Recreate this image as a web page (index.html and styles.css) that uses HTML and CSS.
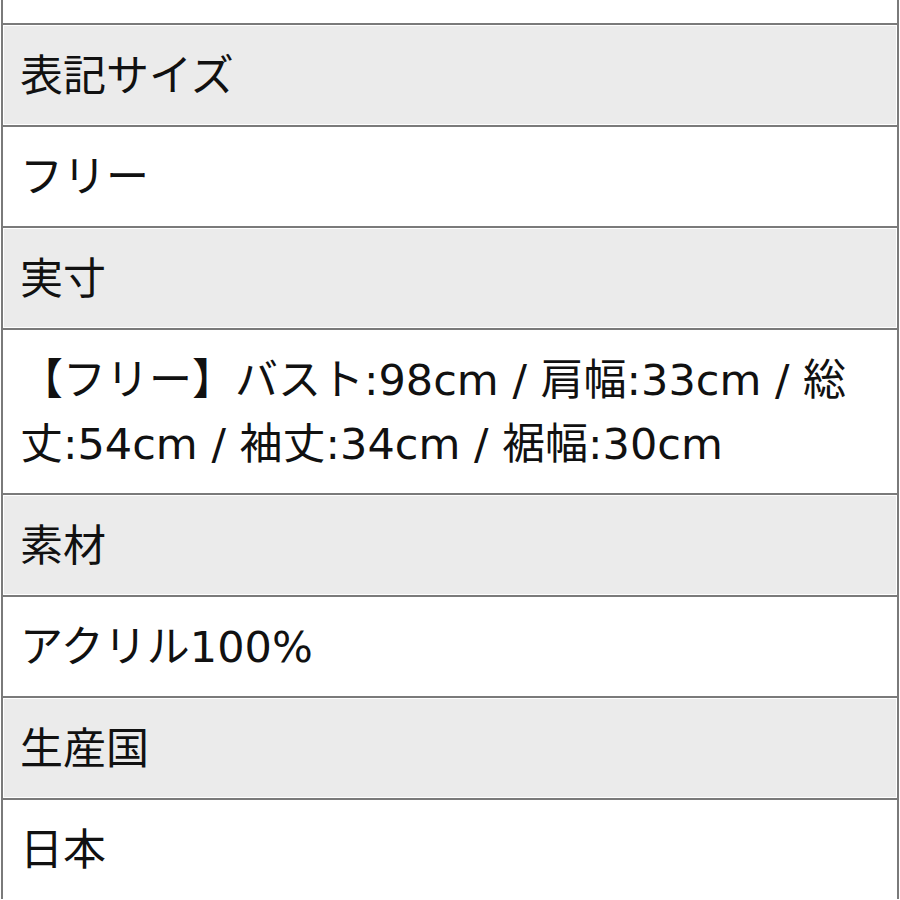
FILE: index.html
```html
<!DOCTYPE html>
<html lang="ja">
<head>
<meta charset="utf-8">
<link rel="stylesheet" href="styles.css">
</head>
<body>
<div class="table">
  <div class="row first"><div class="cell"></div></div>
  <div class="row"><div class="cell head">表記サイズ</div></div>
  <div class="row"><div class="cell">フリー</div></div>
  <div class="row"><div class="cell head">実寸</div></div>
  <div class="row"><div class="cell">【フリー】バスト:98cm / 肩幅:33cm / 総<br>丈:54cm / 袖丈:34cm / 裾幅:30cm</div></div>
  <div class="row"><div class="cell head">素材</div></div>
  <div class="row"><div class="cell">アクリル100%</div></div>
  <div class="row"><div class="cell head">生産国</div></div>
  <div class="row"><div class="cell">日本</div></div>
</div>
</body>
</html>
```
FILE: styles.css
```css
html, body {
  margin: 0;
  padding: 0;
  background: #ffffff;
}
body {
  font-family: "DejaVu Sans", "Noto Sans CJK JP", sans-serif;
  font-size: 43px;
  line-height: 64px;
  color: #111111;
  overflow: hidden;
  height: 900px;
}
.table {
  margin-left: 1px;
  width: 894px;
  border-left: 2px solid #7a7a7a;
  border-right: 2px solid #7a7a7a;
}
.row {
  border-top: 2px solid #7a7a7a;
  padding: 1px;
}
.row.first {
  border-top: none;
  height: 23px;
  padding: 0;
}
.row.first .cell {
  height: 23px;
  padding: 0;
}
.cell {
  padding: 17.5px 16px 16px;
  background: #ffffff;
  white-space: nowrap;
}
.cell.head {
  background: #ebebeb;
}
```
